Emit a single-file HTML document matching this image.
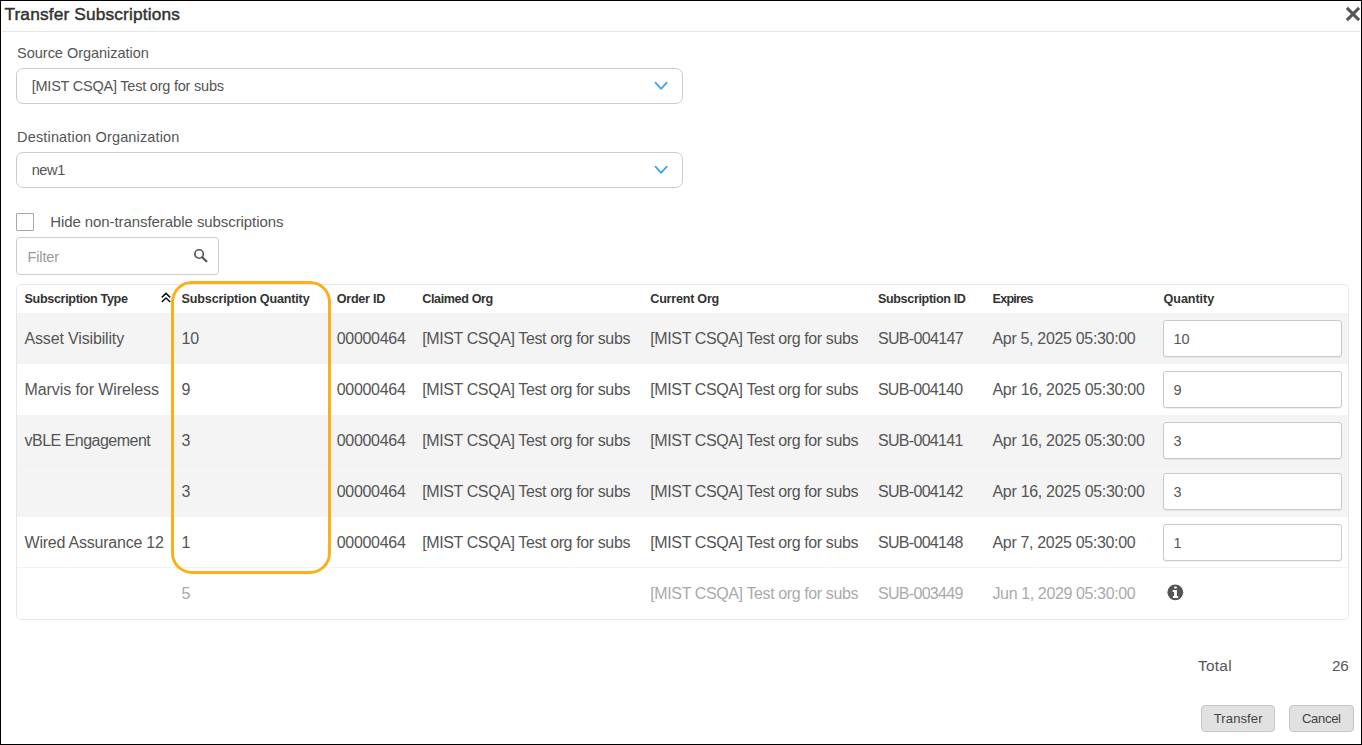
<!DOCTYPE html><html><head><meta charset="utf-8"><style>
*{margin:0;padding:0;box-sizing:border-box}
html,body{width:1362px;height:745px;overflow:hidden;background:#fff}
body{position:relative;font-family:"Liberation Sans",sans-serif}
.t{position:absolute;white-space:pre}
.b{position:absolute}
</style></head><body>
<div class="b" style="left:0;top:0;width:1362px;height:745px;border:1px solid #000"></div>
<div class="t" style="left:4.40px;top:5.76px;font-size:17.3px;line-height:17.3px;color:#333;font-weight:400;letter-spacing:0.153px;-webkit-text-stroke:0.45px #333;">Transfer Subscriptions</div>
<svg class="b" style="left:1344px;top:5px" width="18" height="18" viewBox="0 0 18 18"><path d="M2.9 2.9L15.1 15.1M15.1 2.9L2.9 15.1" stroke="#555" stroke-width="3" stroke-linecap="butt"/></svg>
<div class="b" style="left:2px;top:31px;width:1358px;height:1px;background:#e6e6e6"></div>
<div class="t" style="left:17.10px;top:46.33px;font-size:14.5px;line-height:14.5px;color:#555;font-weight:400;letter-spacing:-0.020px;">Source Organization</div>
<div class="b" style="left:16px;top:68px;width:667px;height:36px;border:1px solid #cdcdcd;border-radius:7px"></div>
<div class="t" style="left:31.70px;top:79.33px;font-size:14.5px;line-height:14.5px;color:#555;font-weight:400;letter-spacing:-0.222px;">[MIST CSQA] Test org for subs</div>
<svg class="b" style="left:652px;top:79px" width="18" height="12" viewBox="0 0 18 12"><path d="M3.5 3.7L9.1 9.9L14.7 3.7" fill="none" stroke="#42a3e9" stroke-width="1.8" stroke-linecap="round" stroke-linejoin="round"/></svg>
<div class="t" style="left:17.10px;top:130.23px;font-size:14.5px;line-height:14.5px;color:#555;font-weight:400;letter-spacing:0.153px;">Destination Organization</div>
<div class="b" style="left:16px;top:152px;width:667px;height:36px;border:1px solid #cdcdcd;border-radius:7px"></div>
<div class="t" style="left:31.70px;top:163.33px;font-size:14.5px;line-height:14.5px;color:#555;font-weight:400;letter-spacing:-0.385px;">new1</div>
<svg class="b" style="left:652px;top:163px" width="18" height="12" viewBox="0 0 18 12"><path d="M3.5 3.7L9.1 9.9L14.7 3.7" fill="none" stroke="#42a3e9" stroke-width="1.8" stroke-linecap="round" stroke-linejoin="round"/></svg>
<div class="b" style="left:16px;top:213px;width:18px;height:18px;border:1px solid #a8a8a8;border-radius:1px"></div>
<div class="t" style="left:50.20px;top:214.30px;font-size:15px;line-height:15px;color:#555;font-weight:400;letter-spacing:-0.078px;">Hide non-transferable subscriptions</div>
<div class="b" style="left:16px;top:237px;width:203px;height:38px;border:1px solid #cdcdcd;border-radius:4px"></div>
<div class="t" style="left:27.50px;top:250.23px;font-size:14.5px;line-height:14.5px;color:#9a9a9a;font-weight:400;letter-spacing:-0.138px;">Filter</div>
<svg class="b" style="left:192px;top:248px" width="17" height="17" viewBox="0 0 17 17"><circle cx="7.1" cy="6" r="4.25" fill="none" stroke="#555" stroke-width="1.7"/><path d="M10.2 9.2L14.4 13.3" stroke="#555" stroke-width="2.2" stroke-linecap="round"/></svg>
<div class="b" style="left:16px;top:284px;width:1333px;height:336px;border:1px solid #e6e6e6;border-radius:5px;overflow:hidden"><div class="b" style="left:0;top:28px;width:1331px;height:51px;background:#f4f4f4"></div><div class="b" style="left:0;top:79px;width:1331px;height:51px;background:#fff"></div><div class="b" style="left:0;top:130px;width:1331px;height:51px;background:#f4f4f4"></div><div class="b" style="left:0;top:181px;width:1331px;height:51px;background:#f4f4f4"></div><div class="b" style="left:0;top:232px;width:1331px;height:51px;background:#fff"></div><div class="b" style="left:0;top:283px;width:1331px;height:51px;background:#fff"></div><div class="b" style="left:0;top:282px;width:1331px;height:1px;background:#f1f1f1"></div><div class="b" style="left:0;top:180px;width:1331px;height:1px;background:#f1f1f1"></div></div>
<div class="t" style="left:24.50px;top:293.13px;font-size:12.6px;line-height:12.6px;color:#333;font-weight:700;letter-spacing:-0.343px;">Subscription Type</div>
<div class="t" style="left:181.60px;top:293.13px;font-size:12.6px;line-height:12.6px;color:#333;font-weight:700;letter-spacing:-0.175px;">Subscription Quantity</div>
<div class="t" style="left:336.70px;top:293.13px;font-size:12.6px;line-height:12.6px;color:#333;font-weight:700;letter-spacing:-0.243px;">Order ID</div>
<div class="t" style="left:422.20px;top:293.13px;font-size:12.6px;line-height:12.6px;color:#333;font-weight:700;letter-spacing:-0.381px;">Claimed Org</div>
<div class="t" style="left:650.30px;top:293.13px;font-size:12.6px;line-height:12.6px;color:#333;font-weight:700;letter-spacing:-0.238px;">Current Org</div>
<div class="t" style="left:877.90px;top:293.13px;font-size:12.6px;line-height:12.6px;color:#333;font-weight:700;letter-spacing:-0.358px;">Subscription ID</div>
<div class="t" style="left:992.50px;top:293.13px;font-size:12.6px;line-height:12.6px;color:#333;font-weight:700;letter-spacing:-0.758px;">Expires</div>
<div class="t" style="left:1163.50px;top:293.13px;font-size:12.6px;line-height:12.6px;color:#333;font-weight:700;letter-spacing:-0.056px;">Quantity</div>
<svg class="b" style="left:158px;top:290px" width="16" height="16" viewBox="0 0 16 16"><path d="M3.8 7.4L8 3.4L12.2 7.4M3.8 12L8 8L12.2 12" fill="none" stroke="#111" stroke-width="1.5"/></svg>
<div class="t" style="left:24.50px;top:331.26px;font-size:16px;line-height:16px;color:#555;font-weight:400;letter-spacing:-0.153px;">Asset Visibility</div>
<div class="t" style="left:181.60px;top:331.26px;font-size:16px;line-height:16px;color:#555;font-weight:400;letter-spacing:-0.300px;">10</div>
<div class="t" style="left:336.70px;top:331.26px;font-size:16px;line-height:16px;color:#555;font-weight:400;letter-spacing:-0.300px;">00000464</div>
<div class="t" style="left:422.20px;top:331.26px;font-size:16px;line-height:16px;color:#555;font-weight:400;letter-spacing:-0.387px;">[MIST CSQA] Test org for subs</div>
<div class="t" style="left:650.30px;top:331.26px;font-size:16px;line-height:16px;color:#555;font-weight:400;letter-spacing:-0.387px;">[MIST CSQA] Test org for subs</div>
<div class="t" style="left:877.90px;top:331.26px;font-size:16px;line-height:16px;color:#555;font-weight:400;letter-spacing:-0.656px;">SUB-004147</div>
<div class="t" style="left:992.50px;top:331.26px;font-size:16px;line-height:16px;color:#555;font-weight:400;letter-spacing:-0.328px;">Apr 5, 2025 05:30:00</div>
<div class="b" style="left:1163px;top:320px;width:179px;height:37px;border:1px solid #cacaca;border-radius:3px;background:#fff;box-shadow:0 1px 0 rgba(0,0,0,0.06)"></div>
<div class="t" style="left:1173.50px;top:331.73px;font-size:14.5px;line-height:14.5px;color:#555;font-weight:400;letter-spacing:0.000px;">10</div>
<div class="t" style="left:24.50px;top:382.26px;font-size:16px;line-height:16px;color:#555;font-weight:400;letter-spacing:-0.083px;">Marvis for Wireless</div>
<div class="t" style="left:181.60px;top:382.26px;font-size:16px;line-height:16px;color:#555;font-weight:400;letter-spacing:-0.300px;">9</div>
<div class="t" style="left:336.70px;top:382.26px;font-size:16px;line-height:16px;color:#555;font-weight:400;letter-spacing:-0.300px;">00000464</div>
<div class="t" style="left:422.20px;top:382.26px;font-size:16px;line-height:16px;color:#555;font-weight:400;letter-spacing:-0.387px;">[MIST CSQA] Test org for subs</div>
<div class="t" style="left:650.30px;top:382.26px;font-size:16px;line-height:16px;color:#555;font-weight:400;letter-spacing:-0.387px;">[MIST CSQA] Test org for subs</div>
<div class="t" style="left:877.90px;top:382.26px;font-size:16px;line-height:16px;color:#555;font-weight:400;letter-spacing:-0.711px;">SUB-004140</div>
<div class="t" style="left:992.50px;top:382.26px;font-size:16px;line-height:16px;color:#555;font-weight:400;letter-spacing:-0.301px;">Apr 16, 2025 05:30:00</div>
<div class="b" style="left:1163px;top:371px;width:179px;height:37px;border:1px solid #cacaca;border-radius:3px;background:#fff;box-shadow:0 1px 0 rgba(0,0,0,0.06)"></div>
<div class="t" style="left:1173.50px;top:382.73px;font-size:14.5px;line-height:14.5px;color:#555;font-weight:400;letter-spacing:0.000px;">9</div>
<div class="t" style="left:24.50px;top:433.26px;font-size:16px;line-height:16px;color:#555;font-weight:400;letter-spacing:-0.510px;">vBLE Engagement</div>
<div class="t" style="left:181.60px;top:433.26px;font-size:16px;line-height:16px;color:#555;font-weight:400;letter-spacing:-0.300px;">3</div>
<div class="t" style="left:336.70px;top:433.26px;font-size:16px;line-height:16px;color:#555;font-weight:400;letter-spacing:-0.300px;">00000464</div>
<div class="t" style="left:422.20px;top:433.26px;font-size:16px;line-height:16px;color:#555;font-weight:400;letter-spacing:-0.387px;">[MIST CSQA] Test org for subs</div>
<div class="t" style="left:650.30px;top:433.26px;font-size:16px;line-height:16px;color:#555;font-weight:400;letter-spacing:-0.387px;">[MIST CSQA] Test org for subs</div>
<div class="t" style="left:877.90px;top:433.26px;font-size:16px;line-height:16px;color:#555;font-weight:400;letter-spacing:-0.678px;">SUB-004141</div>
<div class="t" style="left:992.50px;top:433.26px;font-size:16px;line-height:16px;color:#555;font-weight:400;letter-spacing:-0.301px;">Apr 16, 2025 05:30:00</div>
<div class="b" style="left:1163px;top:422px;width:179px;height:37px;border:1px solid #cacaca;border-radius:3px;background:#fff;box-shadow:0 1px 0 rgba(0,0,0,0.06)"></div>
<div class="t" style="left:1173.50px;top:433.73px;font-size:14.5px;line-height:14.5px;color:#555;font-weight:400;letter-spacing:0.000px;">3</div>
<div class="t" style="left:181.60px;top:484.26px;font-size:16px;line-height:16px;color:#555;font-weight:400;letter-spacing:-0.300px;">3</div>
<div class="t" style="left:336.70px;top:484.26px;font-size:16px;line-height:16px;color:#555;font-weight:400;letter-spacing:-0.300px;">00000464</div>
<div class="t" style="left:422.20px;top:484.26px;font-size:16px;line-height:16px;color:#555;font-weight:400;letter-spacing:-0.387px;">[MIST CSQA] Test org for subs</div>
<div class="t" style="left:650.30px;top:484.26px;font-size:16px;line-height:16px;color:#555;font-weight:400;letter-spacing:-0.387px;">[MIST CSQA] Test org for subs</div>
<div class="t" style="left:877.90px;top:484.26px;font-size:16px;line-height:16px;color:#555;font-weight:400;letter-spacing:-0.678px;">SUB-004142</div>
<div class="t" style="left:992.50px;top:484.26px;font-size:16px;line-height:16px;color:#555;font-weight:400;letter-spacing:-0.301px;">Apr 16, 2025 05:30:00</div>
<div class="b" style="left:1163px;top:473px;width:179px;height:37px;border:1px solid #cacaca;border-radius:3px;background:#fff;box-shadow:0 1px 0 rgba(0,0,0,0.06)"></div>
<div class="t" style="left:1173.50px;top:484.73px;font-size:14.5px;line-height:14.5px;color:#555;font-weight:400;letter-spacing:0.000px;">3</div>
<div class="t" style="left:24.50px;top:535.26px;font-size:16px;line-height:16px;color:#555;font-weight:400;letter-spacing:-0.224px;">Wired Assurance 12</div>
<div class="t" style="left:181.60px;top:535.26px;font-size:16px;line-height:16px;color:#555;font-weight:400;letter-spacing:-0.300px;">1</div>
<div class="t" style="left:336.70px;top:535.26px;font-size:16px;line-height:16px;color:#555;font-weight:400;letter-spacing:-0.300px;">00000464</div>
<div class="t" style="left:422.20px;top:535.26px;font-size:16px;line-height:16px;color:#555;font-weight:400;letter-spacing:-0.387px;">[MIST CSQA] Test org for subs</div>
<div class="t" style="left:650.30px;top:535.26px;font-size:16px;line-height:16px;color:#555;font-weight:400;letter-spacing:-0.387px;">[MIST CSQA] Test org for subs</div>
<div class="t" style="left:877.90px;top:535.26px;font-size:16px;line-height:16px;color:#555;font-weight:400;letter-spacing:-0.678px;">SUB-004148</div>
<div class="t" style="left:992.50px;top:535.26px;font-size:16px;line-height:16px;color:#555;font-weight:400;letter-spacing:-0.334px;">Apr 7, 2025 05:30:00</div>
<div class="b" style="left:1163px;top:524px;width:179px;height:37px;border:1px solid #cacaca;border-radius:3px;background:#fff;box-shadow:0 1px 0 rgba(0,0,0,0.06)"></div>
<div class="t" style="left:1173.50px;top:535.73px;font-size:14.5px;line-height:14.5px;color:#555;font-weight:400;letter-spacing:0.000px;">1</div>
<div class="t" style="left:181.60px;top:586.26px;font-size:16px;line-height:16px;color:#aaa;font-weight:400;letter-spacing:-0.300px;">5</div>
<div class="t" style="left:650.30px;top:586.26px;font-size:16px;line-height:16px;color:#aaa;font-weight:400;letter-spacing:-0.387px;">[MIST CSQA] Test org for subs</div>
<div class="t" style="left:877.90px;top:586.26px;font-size:16px;line-height:16px;color:#aaa;font-weight:400;letter-spacing:-0.678px;">SUB-003449</div>
<div class="t" style="left:992.50px;top:586.26px;font-size:16px;line-height:16px;color:#aaa;font-weight:400;letter-spacing:-0.380px;">Jun 1, 2029 05:30:00</div>
<svg class="b" style="left:1167px;top:583.5px" width="17" height="17" viewBox="0 0 17 17"><circle cx="8.3" cy="8.3" r="7.9" fill="#555"/><rect x="7.1" y="2.6" width="2.8" height="1.9" rx="0.8" fill="#fff"/><path d="M5.7 5.9H9.9V11.9H11.1V14H5.9V11.9H7.1V7.9H5.7Z" fill="#fff"/></svg>
<div class="b" style="left:171px;top:281px;width:160px;height:293px;border:3px solid #fbb01b;border-radius:21px"></div>
<div class="t" style="left:1198.00px;top:658.05px;font-size:15.3px;line-height:15.3px;color:#555;font-weight:400;letter-spacing:0.304px;">Total</div>
<div class="t" style="left:1332.00px;top:658.05px;font-size:15.3px;line-height:15.3px;color:#555;font-weight:400;letter-spacing:-0.183px;">26</div>
<div class="b" style="left:1201px;top:705px;width:74px;height:27px;border:1px solid #c6c6c6;border-radius:4px;background:#e1e1e1"></div>
<div class="t" style="left:1213.80px;top:712.00px;font-size:13px;line-height:13px;color:#444;font-weight:400;letter-spacing:0.114px;">Transfer</div>
<div class="b" style="left:1289px;top:705px;width:65px;height:27px;border:1px solid #c6c6c6;border-radius:4px;background:#e1e1e1"></div>
<div class="t" style="left:1302.00px;top:712.00px;font-size:13px;line-height:13px;color:#444;font-weight:400;letter-spacing:-0.299px;">Cancel</div>
</body></html>
